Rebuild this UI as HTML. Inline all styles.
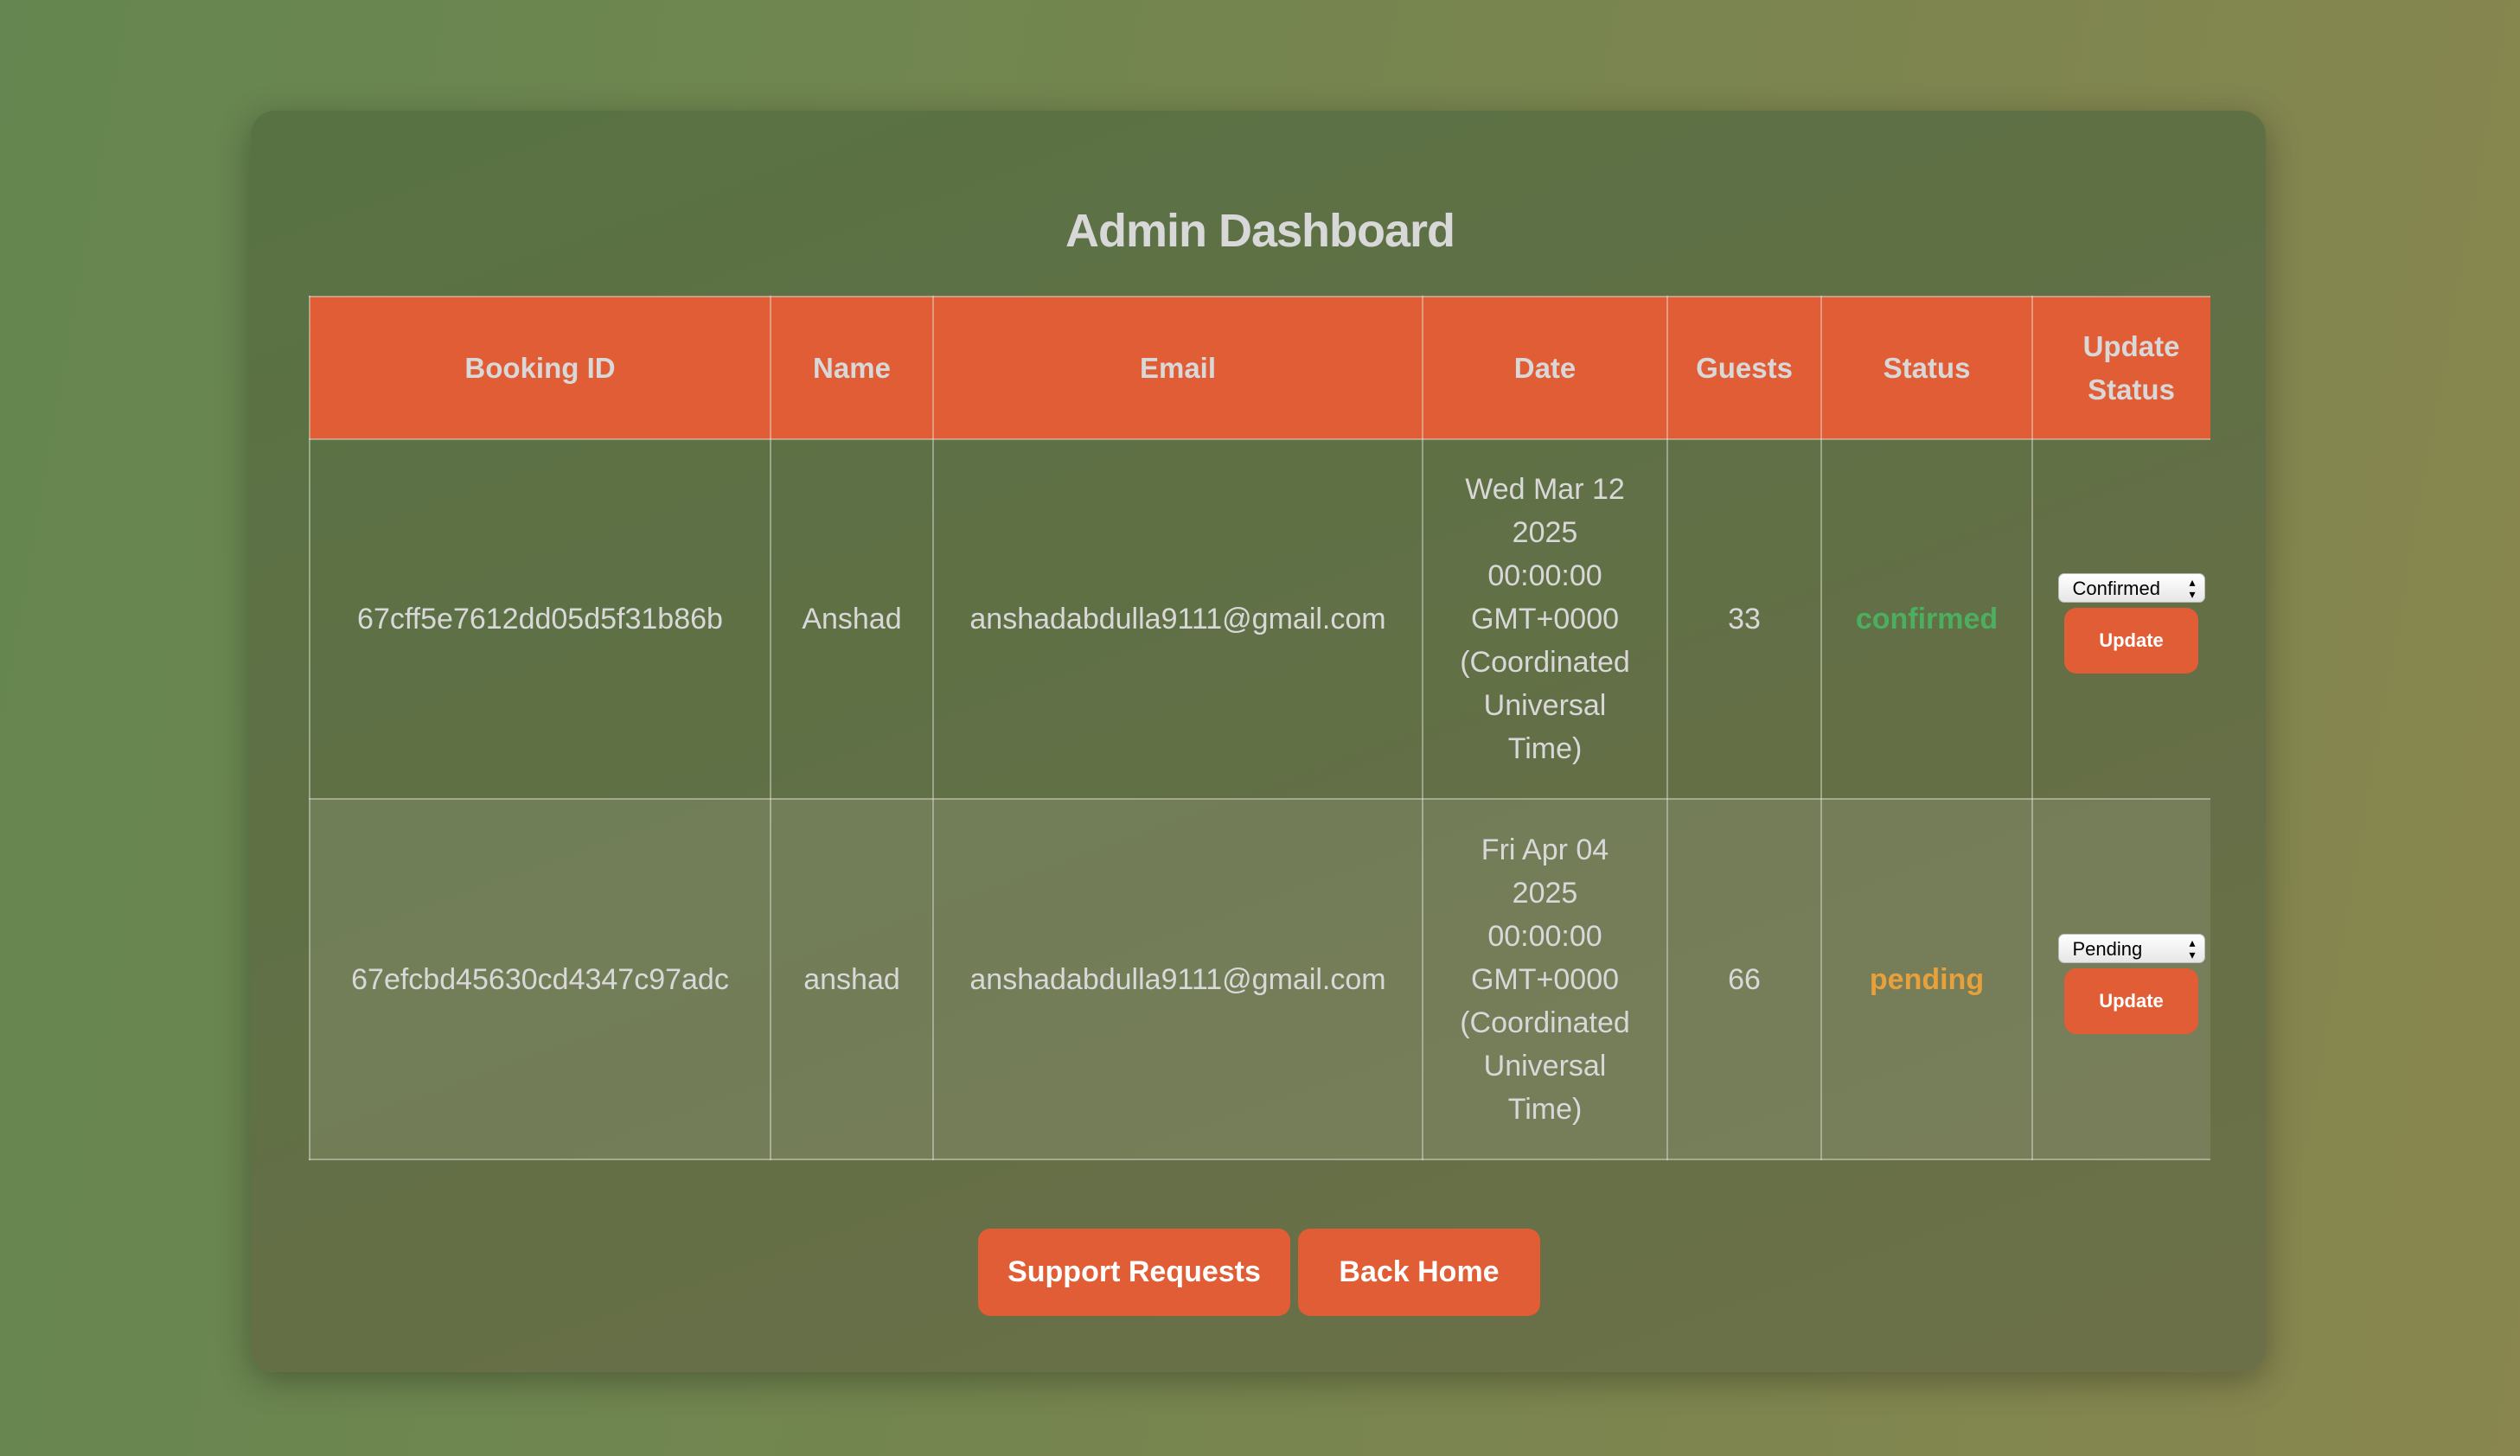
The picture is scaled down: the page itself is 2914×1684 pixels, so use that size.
<!DOCTYPE html>
<html><head><style>
*{box-sizing:border-box;margin:0;padding:0}
body{width:2914px;height:1684px;overflow:hidden;background:linear-gradient(100deg,#658650 0%,#7a854f 60%,#89864f 100%);font-family:"Liberation Sans",sans-serif;position:relative}
.card{position:absolute;left:290px;top:128px;width:2330px;height:1459px;border-radius:28px;background:linear-gradient(160deg,#587244 0%,#646f46 60%,#6c7049 100%);box-shadow:0 10px 40px rgba(0,0,0,.3)}
h1{position:absolute;left:0;right:0;top:236px;text-align:center;color:#d8d8d8;font-size:54px;font-weight:bold;letter-spacing:-1px}
table{position:absolute;left:357px;top:342px;width:2198px;border-collapse:collapse;table-layout:fixed}
th,td{border:2px solid rgba(230,230,220,.45);text-align:center;color:#d8d8d8;font-size:34px;line-height:50px}
th:last-child,td:last-child{border-right:none;padding-left:22px}
td:last-child{padding-top:10px}
th{background:#e15d35;height:165px;font-weight:bold;font-size:33px}
tr.r1 td{height:416px}
tr.r2 td{height:417px;background:rgba(255,255,255,.1)}
.conf{color:#4caf60;font-weight:bold}
.pend{color:#e8a13a;font-weight:bold}
.sel{display:block;margin:0 auto 6px;width:170px;height:34px;border-radius:7px;background:linear-gradient(#fff,#e6e6e6);color:#000;font-size:22px;line-height:34px;text-align:left;padding-left:16px;position:relative;border:1px solid #bbb}
.sel:after{content:"▴\A▾";white-space:pre;position:absolute;right:10px;top:2px;font-size:14px;line-height:14px}
.ub{display:block;margin:0 auto;width:155px;height:76px;border-radius:14px;background:#e15d35;color:#fff;font-size:22px;font-weight:bold;line-height:76px}
.btn{position:absolute;top:1421px;height:101px;border-radius:14px;background:#e15d35;color:#fff;font-size:34px;font-weight:bold;line-height:101px;text-align:center}
</style></head><body>
<div class="card"></div>
<h1>Admin Dashboard</h1>
<table>
<colgroup><col style="width:533px"><col style="width:188px"><col style="width:566px"><col style="width:283px"><col style="width:178px"><col style="width:244px"><col style="width:206px"></colgroup>
<tr><th>Booking ID</th><th>Name</th><th>Email</th><th>Date</th><th>Guests</th><th>Status</th><th>Update<br>Status</th></tr>
<tr class="r1"><td>67cff5e7612dd05d5f31b86b</td><td>Anshad</td><td>anshadabdulla9111@gmail.com</td><td>Wed Mar 12<br>2025<br>00:00:00<br>GMT+0000<br>(Coordinated<br>Universal<br>Time)</td><td>33</td><td class="conf">confirmed</td><td><span class="sel">Confirmed</span><span class="ub">Update</span></td></tr>
<tr class="r2"><td>67efcbd45630cd4347c97adc</td><td>anshad</td><td>anshadabdulla9111@gmail.com</td><td>Fri Apr 04<br>2025<br>00:00:00<br>GMT+0000<br>(Coordinated<br>Universal<br>Time)</td><td>66</td><td class="pend">pending</td><td><span class="sel">Pending</span><span class="ub">Update</span></td></tr>
</table>
<div class="btn" style="left:1131px;width:361px">Support Requests</div>
<div class="btn" style="left:1501px;width:280px">Back Home</div>
</body></html>
